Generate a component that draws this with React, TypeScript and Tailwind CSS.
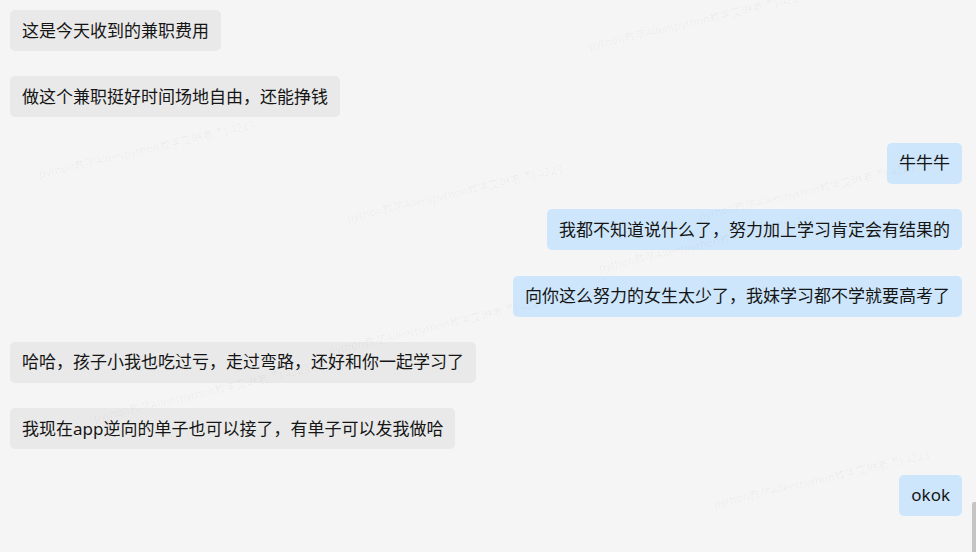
type Msg = { text: string; mine: boolean };

const messages: Msg[] = [
  { text: "这是今天收到的兼职费用", mine: false },
  { text: "做这个兼职挺好时间场地自由，还能挣钱", mine: false },
  { text: "牛牛牛", mine: true },
  { text: "我都不知道说什么了，努力加上学习肯定会有结果的", mine: true },
  { text: "向你这么努力的女生太少了，我妹学习都不学就要高考了", mine: true },
  { text: "哈哈，孩子小我也吃过亏，走过弯路，还好和你一起学习了", mine: false },
  { text: "我现在app逆向的单子也可以接了，有单子可以发我做哈", mine: false },
  { text: "okok", mine: true },
];

// faint diagonal watermark, positions eyeballed from the screenshot
const marks: [number, number][] = [
  [40, 168],
  [348, 212],
  [600, 262],
  [-220, 352],
  [95, 412],
  [330, 345],
  [590, 40],
  [700, 210],
  [715, 498],
  [-235, 585],
];

const WM = "python教学Allen(python教学艾琳老师) 4223";

function Bubble({ text, mine }: Msg) {
  return (
    <div className={mine ? "flex justify-end" : "flex justify-start"}>
      <div
        className={
          "flex h-[41px] items-center rounded-[5px] px-3 text-[17px] leading-[22px] text-[#151515] " +
          (mine ? "bg-[#cde6fb]" : "bg-[#e9e9e9]")
        }
      >
        {text}
      </div>
    </div>
  );
}

export default function App() {
  return (
    <div
      className="relative h-[552px] w-full overflow-hidden bg-[#f5f5f5]"
      style={{ fontFamily: '"Noto Sans", "Noto Sans CJK SC", sans-serif' }}
    >
      <div className="flex flex-col gap-[25.4px] pl-[10px] pr-[14px] pt-[10px]">
        {messages.map((m, i) => (
          <Bubble key={i} {...m} />
        ))}
      </div>

      {marks.map(([x, y], i) => (
        <span
          key={i}
          className="pointer-events-none absolute origin-bottom-left rotate-[-13deg] whitespace-nowrap text-[11px] leading-none text-black/[0.045]"
          style={{ left: x, top: y }}
        >
          {WM}
        </span>
      ))}

      {/* scrollbar thumb peeking in at the bottom right */}
      <div className="absolute bottom-0 right-0 h-[50px] w-[4px] rounded-tl-[2px] bg-[#c4c4c4]" />
    </div>
  );
}
